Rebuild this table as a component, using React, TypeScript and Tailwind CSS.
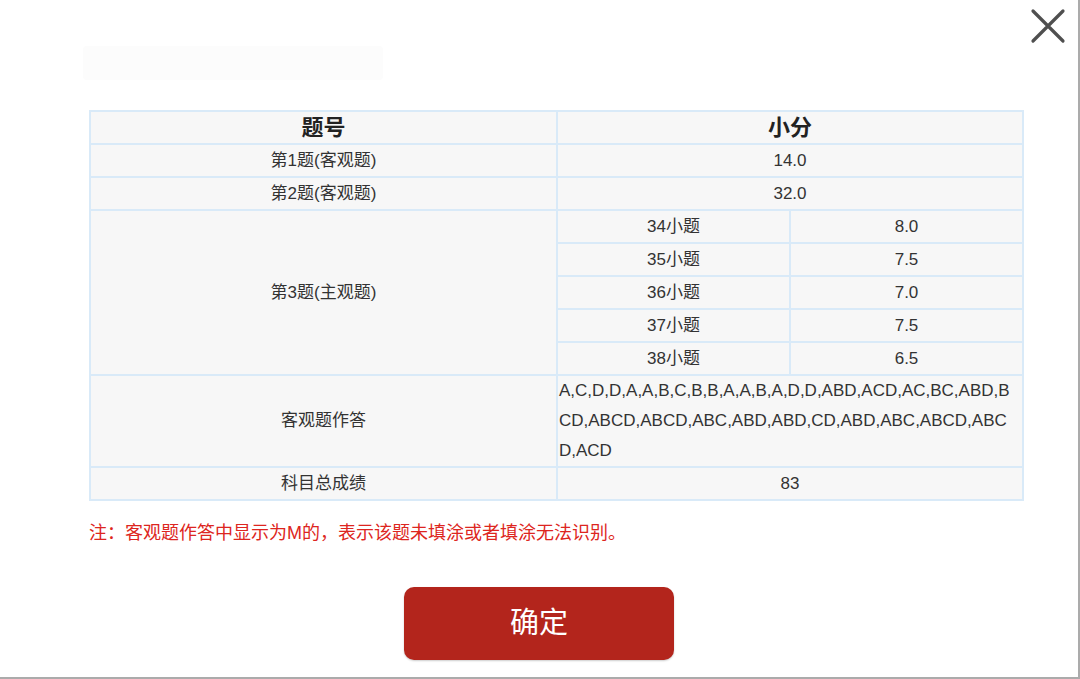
import type { JSX } from "react";

const SUB_ROWS: { label: string; score: string }[] = [
  { label: "34小题", score: "8.0" },
  { label: "35小题", score: "7.5" },
  { label: "36小题", score: "7.0" },
  { label: "37小题", score: "7.5" },
  { label: "38小题", score: "6.5" },
];

const ANSWERS =
  "A,C,D,D,A,A,B,C,B,B,A,A,B,A,D,D,ABD,ACD,AC,BC,ABD,BCD,ABCD,ABCD,ABC,ABD,ABD,CD,ABD,ABC,ABCD,ABCD,ACD";

const FONT = { fontFamily: '"Liberation Sans", "Noto Sans CJK SC", sans-serif' };

const cell = "border-2 border-[#d9eaf8] h-[33px] p-0 text-center align-middle leading-[20px]";

export default function App(): JSX.Element {
  return (
    <div
      className="relative w-[1080px] h-[679px] bg-white border-r-2 border-b-2 border-[#ababab] overflow-hidden text-[#333333]"
      style={FONT}
    >
      {/* close button */}
      <button className="absolute right-[10px] top-[7px] w-[40px] h-[38px] flex items-center justify-center">
        <svg width="36" height="36" viewBox="0 0 36 36">
          <path d="M3 3 L33 33 M33 3 L3 33" stroke="#4f4f4f" strokeWidth="3.2" strokeLinecap="round" />
        </svg>
      </button>

      <div className="pl-[89px] pt-[46px] w-[1022px]">
        {/* faint title placeholder */}
        <div className="w-[300px] h-[34px] ml-[-6px] bg-[#fcfcfc] rounded-sm" />

        <table className="mt-[30px] w-[933px] border-collapse table-fixed bg-[#f7f7f7] text-[17px]">
          <colgroup>
            <col className="w-[467px]" />
            <col className="w-[233px]" />
            <col className="w-[233px]" />
          </colgroup>
          <tbody>
            <tr>
              <td className={`${cell} text-[22px] font-bold text-[#222]`}>题号</td>
              <td className={`${cell} text-[22px] font-bold text-[#222]`} colSpan={2}>
                小分
              </td>
            </tr>
            <tr>
              <td className={cell}>第1题(客观题)</td>
              <td className={cell} colSpan={2}>14.0</td>
            </tr>
            <tr>
              <td className={cell}>第2题(客观题)</td>
              <td className={cell} colSpan={2}>32.0</td>
            </tr>
            {SUB_ROWS.map((r, i) => (
              <tr key={r.label}>
                {i === 0 && (
                  <td className={cell} rowSpan={SUB_ROWS.length}>
                    第3题(主观题)
                  </td>
                )}
                <td className={cell}>{r.label}</td>
                <td className={cell}>{r.score}</td>
              </tr>
            ))}
            <tr>
              <td className={cell}>客观题作答</td>
              <td
                className="border-2 border-[#d9eaf8] px-[1px] py-0 text-left align-middle leading-[30px] break-all"
                colSpan={2}
              >
                {ANSWERS}
              </td>
            </tr>
            <tr>
              <td className={cell}>科目总成绩</td>
              <td className={cell} colSpan={2}>83</td>
            </tr>
          </tbody>
        </table>

        <p className="mt-[19px] text-[18px] text-[#dd2520] leading-[26px]">
          注：客观题作答中显示为M的，表示该题未填涂或者填涂无法识别。
        </p>
      </div>

      <div className="flex justify-center mt-[41px]">
        <button className="w-[270px] h-[73px] rounded-[10px] bg-[#b3251c] text-white text-[29px] shadow-[0_1px_2px_rgba(0,0,0,0.2)]">
          确定
        </button>
      </div>
    </div>
  );
}
